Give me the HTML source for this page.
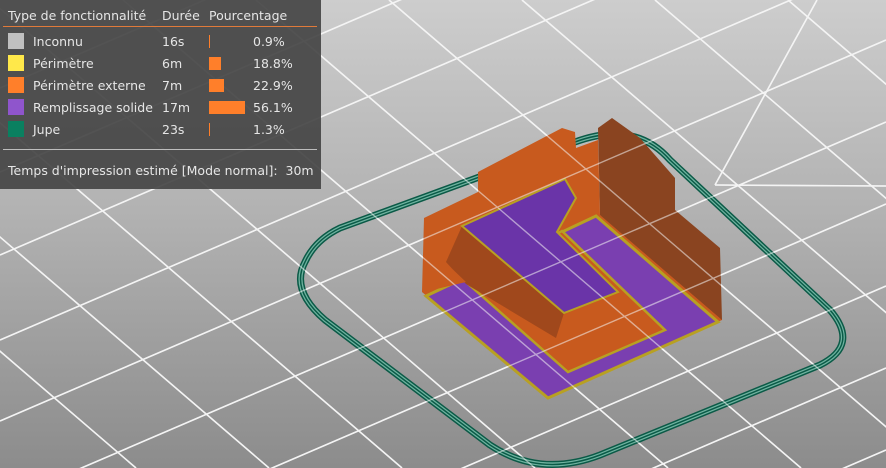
<!DOCTYPE html>
<html><head><meta charset="utf-8"><style>
html,body{margin:0;padding:0;width:886px;height:468px;overflow:hidden;}
body{background:linear-gradient(#cdcdcd 0%,#b2b2b2 45%,#8c8c8c 100%);font-family:"Liberation Sans","DejaVu Sans",sans-serif;position:relative}
svg{position:absolute;left:0;top:0}
.panel{position:absolute;left:0;top:0;width:321px;height:189px;background:rgba(70,70,70,0.93);color:#e6e6e6;font-family:"DejaVu Sans","Liberation Sans",sans-serif;font-size:12.5px;}
.t{position:absolute;white-space:nowrap}
.sq{position:absolute;left:8px;width:16px;height:16px}
.bar{position:absolute;left:209px;height:13px;background:#ff7f2a}
</style></head><body>
<svg width="886" height="468" viewBox="0 0 886 468">
<defs>
<g id="grid">
<line x1="-409" y1="0" x2="136" y2="468"/>
<line x1="-276" y1="0" x2="269" y2="468"/>
<line x1="-143" y1="0" x2="402" y2="468"/>
<line x1="-10" y1="0" x2="535" y2="468"/>
<line x1="123" y1="0" x2="668" y2="468"/>
<line x1="256" y1="0" x2="801" y2="468"/>
<line x1="389" y1="0" x2="934" y2="468"/>
<line x1="522" y1="0" x2="1067" y2="468"/>
<line x1="655" y1="0" x2="1200" y2="468"/>
<line x1="788" y1="0" x2="1333" y2="468"/>
<line x1="0" y1="88" x2="886" y2="-293"/>
<line x1="0" y1="172" x2="886" y2="-209"/>
<line x1="0" y1="255" x2="886" y2="-126"/>
<line x1="0" y1="340" x2="886" y2="-41"/>
<line x1="0" y1="421" x2="886" y2="40"/>
<line x1="0" y1="503" x2="886" y2="122"/>
<line x1="0" y1="585" x2="886" y2="204"/>
<line x1="0" y1="667" x2="886" y2="286"/>
<line x1="0" y1="749" x2="886" y2="368"/>
<line x1="0" y1="831" x2="886" y2="450"/>
<line x1="715" y1="185" x2="886" y2="186"/>
<line x1="715" y1="185" x2="817" y2="0"/>
</g>
</defs>
<use href="#grid" stroke="#f4f4f4" stroke-width="1.6" fill="none"/>
<g fill="none">
<path d="M340,228 L575,142 Q635,120 670,160 L830,310 Q860,345 820,365 L600,455 Q540,478 490,445 L325,320 Q290,290 305,262 Q315,240 340,228 Z" stroke="#0b5a47" stroke-width="7"/>
<path d="M340,228 L575,142 Q635,120 670,160 L830,310 Q860,345 820,365 L600,455 Q540,478 490,445 L325,320 Q290,290 305,262 Q315,240 340,228 Z" stroke="#6fb3a0" stroke-width="4"/>
<path d="M340,228 L575,142 Q635,120 670,160 L830,310 Q860,345 820,365 L600,455 Q540,478 490,445 L325,320 Q290,290 305,262 Q315,240 340,228 Z" stroke="#0b5a47" stroke-width="1.5"/>
</g>
<polygon points="598,128 612,118 640,138 675,178 675,210 720,248 722,320 640,300 600,215" fill="#8a4420"/>
<polygon points="424,218 478,192 478,172 562,128 575,132 576,148 598,140 600,215 722,320 548,398 422,292" fill="#c85a1e"/>
<polygon points="426,296 596,216 718,322 548,398" fill="#7a3fb0" stroke="#b8a022" stroke-width="3"/>
<polygon points="466,282 562,231 665,330 568,372" fill="#c85a1e" stroke="#b8a022" stroke-width="2.5"/>
<polygon points="446,262 462,226 564,313 556,338 466,284" fill="#a0481c"/>
<polygon points="445,262 424,262 424,292 466,282" fill="#c85a1e"/>
<polygon points="462,226 565,179 576,198 557,232 618,292 564,313" fill="#6a34a8" stroke="#b8a022" stroke-width="2"/>
<use href="#grid" stroke="#f4f4f4" stroke-width="1.4" fill="none" opacity="0.55"/>
</svg>
<div class="panel">
<div class="t" style="left:8px;top:8px">Type de fonctionnalité</div>
<div class="t" style="left:162px;top:8px">Durée</div>
<div class="t" style="left:209px;top:8px">Pourcentage</div>
<div style="position:absolute;left:3px;top:26px;width:314px;height:1px;background:#e07a3a"></div>
<div class="sq" style="top:33px;background:#c0c0c0"></div><div class="t" style="left:33px;top:34px">Inconnu</div><div class="t" style="left:162px;top:34px">16s</div><div class="bar" style="top:35px;width:1px"></div><div class="t" style="left:253px;top:34px">0.9%</div>
<div class="sq" style="top:55px;background:#ffe84a"></div><div class="t" style="left:33px;top:56px">Périmètre</div><div class="t" style="left:162px;top:56px">6m</div><div class="bar" style="top:57px;width:12px"></div><div class="t" style="left:253px;top:56px">18.8%</div>
<div class="sq" style="top:77px;background:#ff7f2a"></div><div class="t" style="left:33px;top:78px">Périmètre externe</div><div class="t" style="left:162px;top:78px">7m</div><div class="bar" style="top:79px;width:15px"></div><div class="t" style="left:253px;top:78px">22.9%</div>
<div class="sq" style="top:99px;background:#8f55cc"></div><div class="t" style="left:33px;top:100px">Remplissage solide</div><div class="t" style="left:162px;top:100px">17m</div><div class="bar" style="top:101px;width:36px"></div><div class="t" style="left:253px;top:100px">56.1%</div>
<div class="sq" style="top:121px;background:#0a8060"></div><div class="t" style="left:33px;top:122px">Jupe</div><div class="t" style="left:162px;top:122px">23s</div><div class="bar" style="top:123px;width:1px"></div><div class="t" style="left:253px;top:122px">1.3%</div>
<div style="position:absolute;left:3px;top:149px;width:314px;height:1px;background:#bdbdbd"></div>
<div class="t" style="left:8px;top:163px">Temps d'impression estimé [Mode normal]:&nbsp; 30m</div>
</div>
</body></html>
